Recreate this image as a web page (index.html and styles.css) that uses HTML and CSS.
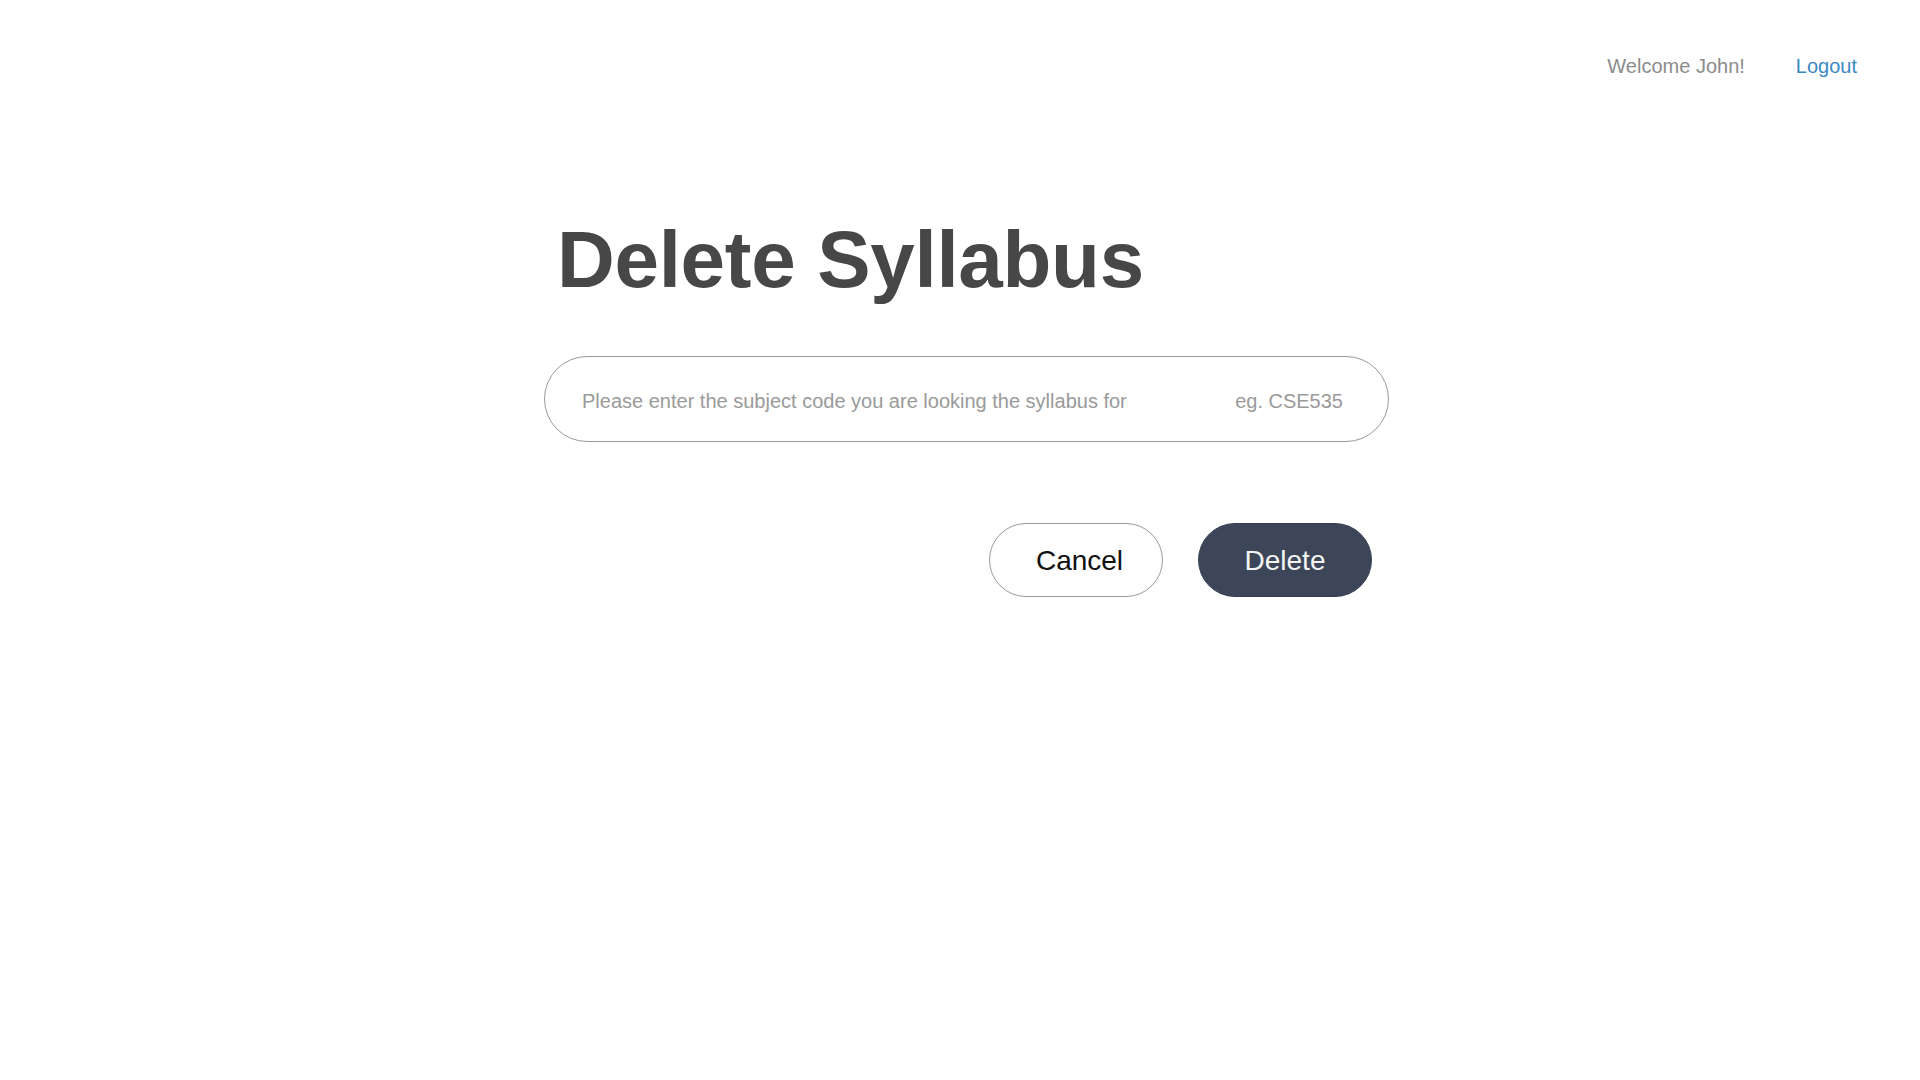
FILE: index.html
```html
<!DOCTYPE html>
<html lang="en">
<head>
<meta charset="utf-8">
<title>Delete Syllabus</title>
<link rel="stylesheet" href="styles.css">
</head>
<body>
  <header class="topbar">
    <span class="welcome">Welcome John!</span>
    <a class="logout" href="#">Logout</a>
  </header>
  <main class="panel">
    <h1 class="title">Delete Syllabus</h1>
    <div class="search">
      <input class="search-input" type="text" placeholder="Please enter the subject code you are looking the syllabus for">
      <span class="search-hint">eg. CSE535</span>
    </div>
    <div class="actions">
      <button class="btn btn-cancel" type="button">Cancel</button>
      <button class="btn btn-delete" type="button">Delete</button>
    </div>
  </main>
</body>
</html>
```

FILE: styles.css
```css
html, body {
  margin: 0;
  padding: 0;
  background: #ffffff;
}

body {
  font-family: "Liberation Sans", Arial, Helvetica, sans-serif;
  color: #474747;
}

.topbar {
  display: flex;
  justify-content: flex-end;
  align-items: center;
  gap: 51px;
  padding: 54px 63px 0 0;
  font-size: 20px;
  line-height: 24px;
}

.welcome {
  color: #8c8c8c;
}

.logout {
  color: #3c88c2;
  text-decoration: none;
}

.panel {
  width: 845px;
  margin: 142px 0 0 544px;
}

.title {
  margin: 0 0 56px 0;
  padding-left: 13px;
  font-size: 80px;
  line-height: 80px;
  font-weight: 700;
  letter-spacing: -0.3px;
  color: #474747;
}

.search {
  box-sizing: border-box;
  height: 86px;
  display: flex;
  align-items: center;
  padding: 4px 45px 0 37px;
  border: 1px solid #9a9a9a;
  border-radius: 43px;
}

.search-input {
  flex: 1;
  min-width: 0;
  border: none;
  outline: none;
  padding: 0;
  margin: 0;
  background: transparent;
  font-family: "Liberation Sans", Arial, Helvetica, sans-serif;
  font-size: 20px;
  line-height: 24px;
  color: #333;
}

.search-input::placeholder {
  color: #9a9a9a;
  opacity: 1;
}

.search-hint {
  font-size: 20px;
  line-height: 24px;
  color: #9a9a9a;
}

.actions {
  display: flex;
  justify-content: flex-end;
  gap: 35px;
  margin-top: 81px;
  padding-right: 17px;
}

.btn {
  box-sizing: border-box;
  width: 174px;
  height: 74px;
  border-radius: 37px;
  padding: 2px 0 0 0;
  font-family: "Liberation Sans", Arial, Helvetica, sans-serif;
  font-size: 28px;
  line-height: 32px;
  cursor: pointer;
}

.btn-cancel {
  background: #ffffff;
  border: 1px solid #9a9a9a;
  color: #111111;
  padding-left: 7px;
}

.btn-delete {
  background: #3d4659;
  border: 1px solid #384153;
  color: #f4f4f4;
}
```
